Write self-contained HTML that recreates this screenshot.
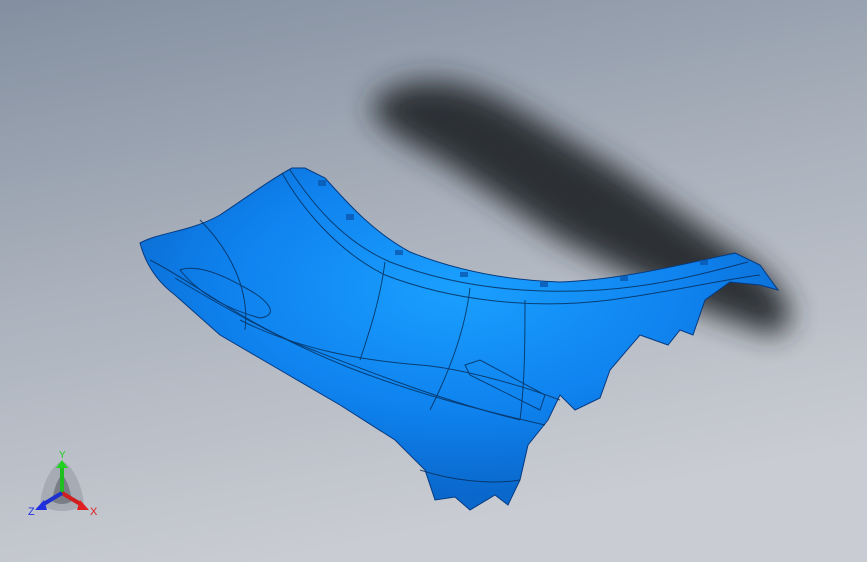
<!DOCTYPE html>
<html><head><meta charset="utf-8"><style>
html,body{margin:0;padding:0;width:867px;height:562px;overflow:hidden;background:#a9b1bc}
svg{display:block}
</style></head><body>
<svg width="867" height="562" viewBox="0 0 867 562" xmlns="http://www.w3.org/2000/svg">
<defs>
<linearGradient id="bg" x1="0" y1="0" x2="0.3" y2="1">
<stop offset="0" stop-color="#838fa0"/>
<stop offset="0.5" stop-color="#abb2bd"/>
<stop offset="1" stop-color="#c9ccd2"/>
</linearGradient>
<radialGradient id="blue" cx="0.5" cy="0.35" r="0.6">
<stop offset="0" stop-color="#1aa0ff"/>
<stop offset="0.6" stop-color="#0f82ee"/>
<stop offset="1" stop-color="#0a68cc"/>
</radialGradient>
<filter id="blur" x="-30%" y="-30%" width="160%" height="160%"><feGaussianBlur stdDeviation="14"/></filter>
</defs>
<rect width="867" height="562" fill="url(#bg)"/>
<path d="M380,95 C420,70 470,80 520,110 L620,170 L720,240 C790,280 810,330 770,335 L700,310 L560,240 L440,160 C380,130 360,110 380,95Z" fill="#25292e" filter="url(#blur)" opacity="0.95"/>
<path d="M140,243 C160,232 190,232 220,215 C250,195 270,180 292,168 L305,168 L325,178 C345,200 370,230 410,252 C450,268 500,280 560,282 C620,280 680,265 735,253 L760,265 L778,290 L760,285 L730,282 L705,300 L693,335 L680,330 L668,345 L640,335 L610,370 L600,398 L575,410 L560,395 L548,420 L528,445 L520,480 L508,505 L495,495 L470,510 L455,497 L435,500 L425,470 L395,440 L340,405 L280,370 L220,335 L175,295 C155,280 145,262 140,243 Z" fill="url(#blue)" stroke="#063a80" stroke-width="1"/>
<g fill="none" stroke="#05305f" stroke-width="1" opacity="0.85">
<path d="M290,170 C310,200 340,240 390,262 C450,285 520,295 600,290 C660,286 710,272 748,262"/>
<path d="M282,173 C300,205 335,250 385,275 C450,300 530,310 610,300 C670,292 720,280 760,275"/>
<path d="M150,260 C190,280 240,320 300,345 C370,372 440,400 520,420"/>
<path d="M175,278 C220,305 280,340 350,368 C420,395 480,410 545,425"/>
<path d="M180,270 C190,266 210,268 240,285 C270,300 280,315 260,318 C230,310 200,295 180,270Z"/>
<path d="M200,220 C230,250 250,290 245,330"/>
<path d="M385,262 C380,300 370,330 360,360"/>
<path d="M470,288 C465,330 450,370 430,410"/>
<path d="M525,300 C525,340 525,380 520,420"/>
<path d="M240,320 C300,350 360,360 420,365 C460,368 520,385 560,400"/>
<path d="M465,365 L480,360 L545,395 L540,410 L470,375Z"/>
<path d="M420,470 C450,480 490,485 520,480"/>
</g>
<g fill="#0a58b0" opacity="0.8">
<rect x="318" y="180" width="8" height="6"/><rect x="346" y="214" width="8" height="6"/>
<rect x="395" y="250" width="8" height="5"/><rect x="460" y="272" width="8" height="5"/>
<rect x="540" y="282" width="8" height="5"/><rect x="620" y="276" width="8" height="5"/>
<rect x="700" y="260" width="8" height="5"/>
</g>
<g transform="translate(62,493)">
<path d="M-22,12 C-20,-10 -10,-28 0,-32 C10,-28 20,-10 22,12 C8,20 -8,20 -22,12Z" fill="#8a9098" opacity="0.45"/>
<path d="M-10,8 C-8,-5 -4,-15 0,-18 C4,-15 8,-5 10,8 C4,12 -4,12 -10,8Z" fill="#4b5058" opacity="0.5"/>
<line x1="0" y1="0" x2="0" y2="-25" stroke="#1fbf1f" stroke-width="4"/>
<path d="M-6,-25 L0,-33 L6,-25Z" fill="#22d022"/>
<line x1="0" y1="0" x2="20" y2="12" stroke="#d01d1d" stroke-width="4"/>
<path d="M18,7 L27,17 L15,17Z" fill="#e02020"/>
<line x1="0" y1="0" x2="-20" y2="12" stroke="#1d2fd0" stroke-width="4"/>
<path d="M-18,7 L-27,17 L-15,17Z" fill="#2030e0"/>
<text x="-3" y="-35" font-family="Liberation Sans, sans-serif" font-size="10" fill="#22cc22">Y</text>
<text x="28" y="22" font-family="Liberation Sans, sans-serif" font-size="11" fill="#e02020">X</text>
<text x="-34" y="22" font-family="Liberation Sans, sans-serif" font-size="11" fill="#2030e0">Z</text>
</g>
</svg>
</body></html>
